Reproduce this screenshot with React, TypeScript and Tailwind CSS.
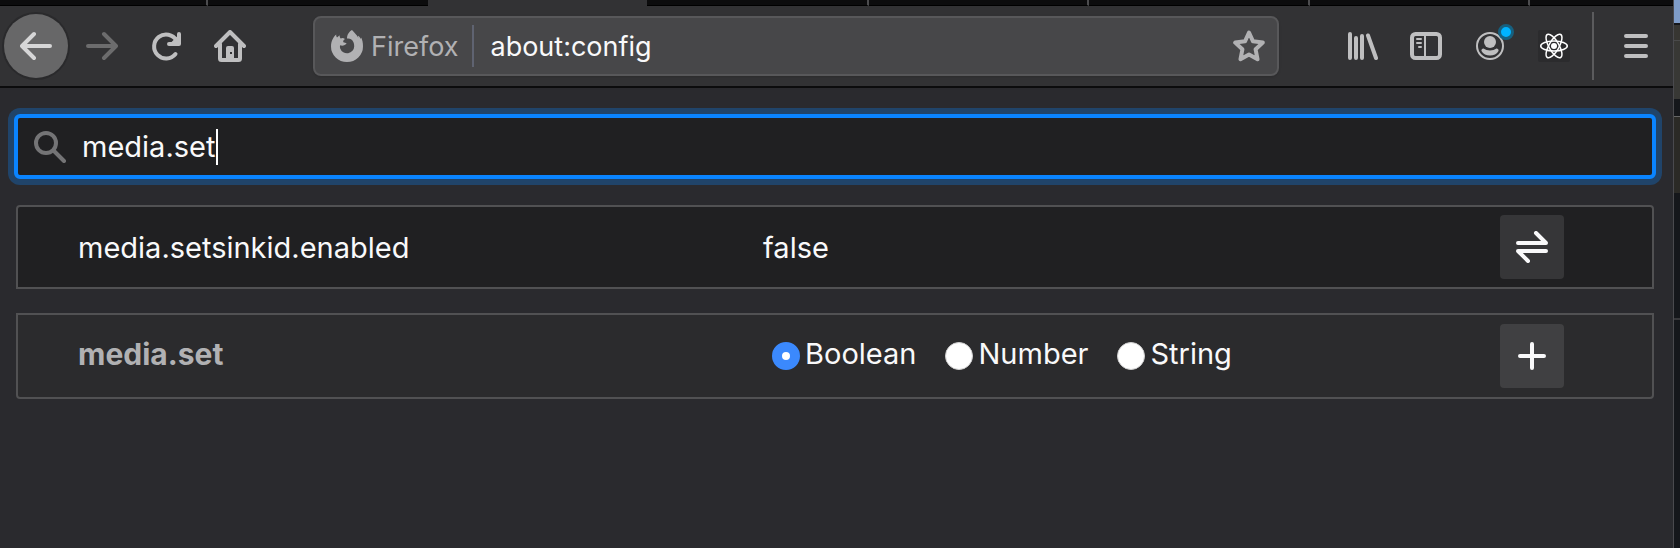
import { useState, type ReactNode } from "react";

function IconButton({ label, children, className = "text-[#bfbfc0]" }: { label: string; children: ReactNode; className?: string }) {
  return (
    <button type="button" aria-label={label} className={`relative flex h-16 w-16 shrink-0 items-center justify-center ${className}`}>
      {children}
    </button>
  );
}

const stroke = {
  width: 32,
  height: 32,
  viewBox: "0 0 32 32",
  fill: "none",
  stroke: "currentColor",
  strokeWidth: 4,
  strokeLinecap: "round" as const,
  strokeLinejoin: "round" as const,
  "aria-hidden": true,
};

function ArrowLeft() {
  return <svg {...stroke}><path d="M30 16H2.500M14 4L2 16l12 12" /></svg>;
}

function ArrowRight() {
  return <svg {...stroke}><path d="M2 16h27.500M18 4l12 12-12 12" /></svg>;
}

function Reload() {
  return (
    <svg {...stroke}>
      <path d="M25.500 24A12 12 0 1 1 26.500 10.500" />
      <path d="M29 4v10H19" />
      <path d="M29 6v8h-8z" fill="currentColor" strokeWidth="2" />
    </svg>
  );
}

function Home() {
  return (
    <svg {...stroke}>
      <path d="M2 16L16 2l14 14" />
      <path d="M6 14v14.500a1.500 1.500 0 0 0 1.500 1.500h17a1.500 1.500 0 0 0 1.500-1.500V14" />
      <path d="M12 31V18a2 2 0 0 1 2-2h4a2 2 0 0 1 2 2v13z" fill="currentColor" stroke="none" />
      <path d="M16 22h2v2h-2z" fill="#323234" stroke="none" />
    </svg>
  );
}

function FirefoxMark() {
  return (
    <svg width="32" height="32" viewBox="0 0 32 32" fill="currentColor" aria-hidden="true">
      <path
        fillRule="evenodd"
        d="M21 0c-2.500 1.500-5 4-5 8.500 1.500-.3 3 0 4 .7 2.300 1.400 3.200 4 3.200 7a7.200 7.200 0 0 1-14 2.300c-.4-1.200-.4-2.200 0-3.200 1.500.7 3 .5 4 0l2-1.200c.5-.4.300-1-.300-1.200l-2.500-.6c-.6-1 .2-2.700 1.600-3.400-1.800-1.200-3.200-1-4.200-.4-.8-.8-1.300-2-1.200-3.300L6 7.500C5.300 6.500 5 5.500 5.200 4.500 3 6.300 0 10.500 0 16.500a16 15.500 0 0 0 32 0c0-4-.6-6.500-1.800-9l-.4 1.500C29.300 7.700 28.300 6.500 27 5.800l.3 2C26 5 23.500 3 21 0z"
      />
    </svg>
  );
}

function Star() {
  return (
    <svg {...stroke}>
      <path d="M16 2.500l4 8.800 9.800 1.300-7.200 6.700 1.900 9.900L16 24.500l-8.500 4.700 1.900-9.900-7.200-6.700 9.800-1.300z" />
    </svg>
  );
}

function Library() {
  return <svg {...stroke}><path d="M4 4v24M10 8v20M16 6v22M22 5.500L30 28" /></svg>;
}

function Sidebar() {
  return (
    <svg {...stroke}>
      <rect x="2" y="4" width="28" height="24" rx="3.500" />
      <path d="M15 4v24M7 9h4M7 13h4M9 17h2" strokeWidth="2" />
    </svg>
  );
}

function Account() {
  return (
    <svg {...stroke}>
      <circle cx="16" cy="16" r="13" strokeWidth="2" />
      <circle cx="16" cy="12" r="6" fill="currentColor" stroke="none" />
      <path d="M9.500 18.500C13 21 19 21 22.500 18.500a2 2 0 0 1 2 2.500C23 24 19.500 25.500 16 25.500S9 24 7.500 21a2 2 0 0 1 2-2.500z" fill="currentColor" stroke="none" />
    </svg>
  );
}

function ReactMark() {
  return (
    <svg width="32" height="32" viewBox="0 0 32 32" fill="none" stroke="#ffffff" strokeWidth="1.500" aria-hidden="true">
      <rect width="32" height="32" rx="2" fill="#2b2b2d" stroke="none" />
      <circle cx="16" cy="16" r="3" fill="#ffffff" stroke="none" />
      <ellipse cx="16" cy="16" rx="13.300" ry="5" />
      <ellipse cx="16" cy="16" rx="13.300" ry="5" transform="rotate(60 16 16)" />
      <ellipse cx="16" cy="16" rx="13.300" ry="5" transform="rotate(120 16 16)" />
    </svg>
  );
}

function Menu() {
  return <svg {...stroke}><path d="M6 6h20M6 16h20M6 26h20" /></svg>;
}

function SearchIcon() {
  return (
    <svg {...stroke}>
      <circle cx="12" cy="12" r="10" />
      <path d="M19.500 19.500L30 30" />
    </svg>
  );
}

function Toggle() {
  return <svg {...stroke}><path d="M2 12h28L20 2M30 20H2l10 10" /></svg>;
}

function Plus() {
  return <svg {...stroke}><path d="M16 4v24M4 16h24" /></svg>;
}

function TabStrip() {
  return (
    <div className="flex h-1.5 shrink-0 text-[#4c4c4e]">
      <div className="w-[208px] border-r-2 border-b border-b-black bg-[#0c0c0d]" />
      <div className="w-[220px] border-b border-black bg-[#0c0c0d]" />
      <div className="w-[219px] bg-[#323234]" />
      <div className="w-[222px] border-r-2 border-b border-b-black bg-[#0c0c0d]" />
      <div className="w-[220px] border-r-2 border-b border-b-black bg-[#0c0c0d]" />
      <div className="w-[221px] border-r-2 border-b border-b-black bg-[#0c0c0d]" />
      <div className="w-[220px] border-r-2 border-b border-b-black bg-[#0c0c0d]" />
      <div className="flex-1 border-b border-black bg-[#0c0c0d]" />
    </div>
  );
}

function Toolbar() {
  return (
    <header className="flex h-[82px] shrink-0 items-center border-b-2 border-[#0c0c0d] bg-[#323234] pr-[5px] pl-1">
      <IconButton label="Back" className="mr-0.5 rounded-full bg-[#676768] text-[#d6d6d7] ring-2 ring-[#2a2a2c]">
        <ArrowLeft />
      </IconButton>
      <IconButton label="Forward" className="text-[#6c6c6d]"><ArrowRight /></IconButton>
      <IconButton label="Reload"><Reload /></IconButton>
      <IconButton label="Home"><Home /></IconButton>
      <div className="mx-[51px] flex h-[60px] flex-1 items-center rounded-lg border-2 border-[#58585a] bg-[#474749] pr-3 pl-4 text-[27px] leading-9 shadow-sm">
        <span className="flex items-center gap-2 text-[#b1b1b3]">
          <FirefoxMark />
          <span className="pt-0.5">Firefox</span>
        </span>
        <span className="mr-4 ml-3.5 h-[42px] w-0.5 bg-[#5f6371]" />
        <input aria-label="Address" defaultValue="about:config" className="min-w-0 flex-1 bg-transparent pt-0.5 text-[#f9f9fa] outline-none" />
        <button type="button" aria-label="Bookmark this page" className="text-[#b1b1b3]"><Star /></button>
      </div>
      <IconButton label="Library"><Library /></IconButton>
      <IconButton label="Sidebars"><Sidebar /></IconButton>
      <IconButton label="Account">
        <Account />
        <span className="absolute top-2.5 right-2 h-4 w-4 rounded-full border-3 border-[#17607f] bg-[#00b3ff]" />
      </IconButton>
      <IconButton label="React Developer Tools"><ReactMark /></IconButton>
      <span className="mr-2.5 ml-1.5 h-[68px] w-0.5 bg-[#5b5b5d]" />
      <IconButton label="Open menu"><Menu /></IconButton>
    </header>
  );
}

const types = ["Boolean", "Number", "String"];

function ActionButton({ label, className, children }: { label: string; className: string; children: ReactNode }) {
  return (
    <button type="button" aria-label={label} className={`flex h-16 w-16 items-center justify-center rounded-sm text-[#f9f9fa] ${className}`}>
      {children}
    </button>
  );
}

function Prefs() {
  const [type, setType] = useState("Boolean");
  return (
    <main className="flex-1 bg-[#2a2a2e] pt-[26px] pr-[17px] pl-3.5 text-[29px] leading-9 text-[#f9f9fa]">
      <label className="relative flex h-[65px] items-center gap-4 rounded-md border-4 border-[#0a84ff] bg-[#202022] pl-4 ring-6 ring-[#20446a]">
        <span className="text-[#747476]"><SearchIcon /></span>
        <input aria-label="Search preference name" defaultValue="media.set" className="min-w-0 flex-1 bg-transparent caret-transparent outline-none" />
        <span className="absolute left-[198px] h-9 w-0.5 bg-white" />
      </label>
      <div className="mt-[26px] mr-0.5 ml-0.5 flex flex-col gap-6">
        <div className="rounded-t-sm border-2 border-[#515153] bg-[#202022]">
          <table className="w-full table-fixed">
            <tbody>
              <tr className="h-20">
                <th scope="row" className="w-[45.6%] pt-0.5 pl-[60px] text-left font-normal">media.setsinkid.enabled</th>
                <td className="pt-0.5">false</td>
                <td className="w-[152px]"><ActionButton label="Toggle" className="bg-[#363638]"><Toggle /></ActionButton></td>
              </tr>
            </tbody>
          </table>
        </div>
        <div className="rounded-b-sm border-2 border-[#515153] bg-[#2b2b2d]">
          <table className="w-full table-fixed">
            <tbody>
              <tr className="h-[82px]">
                <th scope="row" className="w-[45.6%] pb-1 pl-[60px] text-left text-[30px] font-bold text-[#b1b1b3]">media.set</th>
                <td className="pb-1">
                  <div className="flex gap-[29px] pl-[9px]">
                    {types.map((t) => (
                      <label key={t} className="flex items-center gap-[5px]">
                        <input
                          type="radio"
                          name="type"
                          checked={type === t}
                          onChange={() => setType(t)}
                          className="mt-1 h-7 w-7 appearance-none rounded-full border border-[#d0d0d0] bg-white checked:border-10 checked:border-[#3b89fd]"
                        />
                        {t}
                      </label>
                    ))}
                  </div>
                </td>
                <td className="w-[152px]"><ActionButton label="Add" className="bg-[#404042]"><Plus /></ActionButton></td>
              </tr>
            </tbody>
          </table>
        </div>
      </div>
    </main>
  );
}

export default function App() {
  return (
    <div className="flex min-h-screen bg-[#0c0c0d] font-['Inter',sans-serif]">
      <div className="flex min-w-0 flex-1 flex-col">
        <TabStrip />
        <Toolbar />
        <Prefs />
      </div>
      <div className="flex w-[7px] flex-col border-l border-[#4a4a4e] bg-[#15171b]">
        <div className="h-[23px] bg-[#7e9cc8]" />
        <div className="mt-0.5 h-[15px] bg-[#373632]" />
        <div className="h-[59px] border-t border-[#4a4a4a] bg-[#383835]" />
        <div className="mt-[17px] h-[77px] border-t border-[#666666] bg-[#2b2a26]" />
        <div className="mt-[125px] h-0.5 bg-[#38383b]" />
      </div>
    </div>
  );
}
